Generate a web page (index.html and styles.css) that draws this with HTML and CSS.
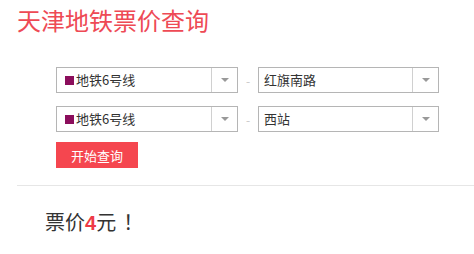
FILE: index.html
```html
<!DOCTYPE html>
<html lang="zh">
<head>
<meta charset="utf-8">
<link rel="stylesheet" href="styles.css">
</head>
<body>
<h1 class="title">天津地铁票价查询</h1>
<div class="form">
  <div class="row">
    <div class="select line-select"><span class="swatch"></span><span class="label">地铁6号线</span><span class="arrow"></span></div>
    <span class="dash">-</span>
    <div class="select station-select"><span class="label">红旗南路</span><span class="arrow"></span></div>
  </div>
  <div class="row">
    <div class="select line-select"><span class="swatch"></span><span class="label">地铁6号线</span><span class="arrow"></span></div>
    <span class="dash">-</span>
    <div class="select station-select"><span class="label">西站</span><span class="arrow"></span></div>
  </div>
  <button class="btn">开始查询</button>
</div>
<hr class="divider">
<p class="result">票价<b class="price">4</b>元<span class="bang">！</span></p>
</body>
</html>
```
FILE: styles.css
```css
html, body {
  margin: 0;
  padding: 0;
  background: #fff;
  font-family: "Noto Sans CJK SC", "Noto Sans", sans-serif;
}
.title {
  margin: 0;
  padding: 4px 0 0 17px;
  height: 32px;
  font-size: 24px;
  line-height: 32px;
  font-weight: normal;
  color: #ee4a55;
}
.form {
  padding: 31px 0 0 56px;
  display: flex;
  flex-direction: column;
  align-items: flex-start;
}
.row {
  display: flex;
  align-items: center;
  height: 26px;
  margin-bottom: 13px;
}
.row + .row { margin-bottom: 10px; }
.select {
  box-sizing: border-box;
  height: 26px;
  border: 1px solid #b5b5b5;
  display: flex;
  align-items: center;
  font-size: 13px;
  color: #333;
}
.line-select { width: 182px; }
.station-select { width: 181px; }
.swatch {
  width: 9px;
  height: 9px;
  background: #8b0e5c;
  margin: 0 2px 0 8px;
}
.station-select .label { margin-left: 5px; }
.label { flex: 1; line-height: 24px; }
.arrow {
  width: 25px;
  height: 24px;
  border-left: 1px solid #d0d0d0;
  display: flex;
  align-items: center;
  justify-content: center;
}
.arrow::after {
  content: "";
  border-left: 4px solid transparent;
  border-right: 4px solid transparent;
  border-top: 4px solid #999;
}
.dash {
  width: 20px;
  text-align: center;
  color: #c8c8c8;
  font-size: 12px;
}
.btn {
  width: 82px;
  height: 26px;
  border: 0;
  background: #f5464f;
  color: #fff;
  font-family: inherit;
  font-size: 13px;
  padding: 0;
}
.divider {
  margin: 17px 0 0 17px;
  border: 0;
  border-top: 1px solid #e6e6e6;
  height: 0;
}
.result {
  margin: 22px 0 0 45px;
  font-size: 20px;
  line-height: 28px;
  color: #333;
}
.bang { margin-left: 7px; }
.price {
  color: #ee3a46;
  font-weight: bold;
  font-family: "Liberation Sans", sans-serif;
}
```
